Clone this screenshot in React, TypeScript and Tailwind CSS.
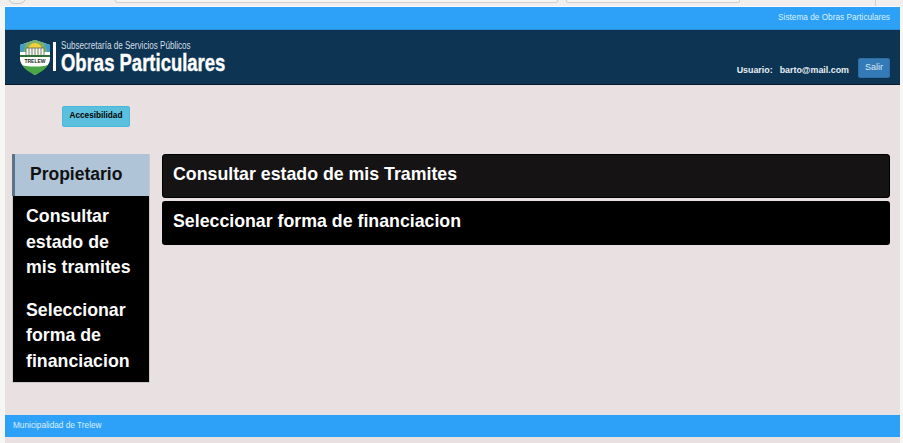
const font = "font-['Liberation_Sans',Arial,sans-serif]";

function Shield() {
  return (
    <svg width="30" height="36" viewBox="0 0 30 36" className="shrink-0">
      <path d="M0 6 L15 1 L30 6 V20 C30 27 21 32 15 36 C9 32 0 27 0 20 Z" fill="#ffffff" />
      <path d="M0 6 L15 1 L30 6 V13 H0 Z" fill="#3f9fc9" />
      <path d="M15 1 L24 4 L27 13 H3 L6 4 Z" fill="#7fb06a" />
      <circle cx="15" cy="11" r="7" fill="#f3cf3c" />
      <rect x="6" y="9" width="18" height="8" fill="#f4f4ec" stroke="#4b5a4c" strokeWidth="0.7" />
      <path d="M9 9v8M12 9v8M15 9v8M18 9v8M21 9v8" stroke="#4b5a4c" strokeWidth="0.7" />
      <rect x="0" y="16" width="30" height="2" fill="#2f6e35" />
      <path d="M2 26 C8 28 22 28 28 26 C25 31 19 34 15 36 C11 34 5 31 2 26 Z" fill="#4aa547" />
      <text x="15" y="23.5" textAnchor="middle" fontSize="5" fontWeight="700" fill="#1c2a1c" fontFamily="Liberation Sans, sans-serif">TRELEW</text>
    </svg>
  );
}

export default function App() {
  const sideLinks = ["Consultar estado de mis tramites", "Seleccionar forma de financiacion"];

  return (
    <div className={`${font} w-[903px] h-[443px] overflow-hidden bg-[#f6f6f4]`}>
      <div className="h-[7px] relative bg-[#f0efed]">
        <div className="absolute left-[8px] -top-[9px] w-[18px] h-[13px] rounded-full border border-[#c4c4c4]" />
        <div className="absolute left-[115px] -top-[2px] w-[443px] h-[5px] rounded-[2px] border border-[#cfcfcf] bg-[#f4f4f3]" />
        <div className="absolute left-[566px] -top-[2px] w-[174px] h-[5px] rounded-[2px] border border-[#cfcfcf] bg-[#f4f4f3]" />
        <div className="absolute left-[875px] top-0 w-px h-[6px] bg-[#d0d0d0]" />
        <div className="absolute left-0 right-0 bottom-0 h-px bg-[#fafafa]" />
      </div>
      <div className="ml-[5px] mr-[3px] h-[436px] flex flex-col bg-[#e9e0e1]">
        <div className="h-[23px] bg-[#2da1f8] border-b border-[#2a8fdb] flex items-center justify-end pr-[10px]">
          <span className="text-[8.25px] text-[#dcefff]">Sistema de Obras Particulares</span>
        </div>
        <header className="h-[55px] bg-[#0d3553] border-b border-[#06192a] flex">
          <div className="flex items-center pl-[15px] pb-[1px]">
            <Shield />
            <div className="w-[3px] h-[29px] bg-white ml-[3px] mr-[5px]" />
            <div className="flex flex-col text-white">
              <span className="text-[10px] leading-[12px] text-[#d6dfe6] origin-left scale-x-[0.81]">Subsecretaría de Servicios Públicos</span>
              <span className="text-[24px] leading-[20px] mt-[1px] font-bold origin-left scale-x-[0.77] [-webkit-text-stroke:0.4px_white]">Obras Particulares</span>
            </div>
          </div>
          <div className="ml-auto flex items-end pr-[10px] pb-[6px]">
            <span className="text-[8.9px] font-bold text-[#e8eef3] mb-[1px]">Usuario:</span>
            <span className="text-[8.9px] font-bold text-[#e8eef3] ml-[7px] mb-[1px]">barto@mail.com</span>
            <div className="ml-[9px] w-[32px] h-[20px] rounded-[2px] bg-[#337ab7] border border-[#2e6da4] flex items-center justify-center text-[9px] text-[#dcebf7]">Salir</div>
          </div>
        </header>
        <main className="flex-1 flex flex-col">
          <div className="pl-[57px] pt-[21px]">
            <div className="w-[68px] h-[21px] rounded-[2px] bg-[#5bc0de] border border-[#46b8da] flex items-center justify-center text-[8.2px] font-bold text-black">Accesibilidad</div>
          </div>
          <div className="flex items-start mt-[27px] pl-[7px]">
            <aside className="w-[138px] border border-[#cfc8c8] border-t-0 bg-black">
              <div className="-ml-px h-[42px] bg-[#b0c4d8] border-l-[3px] border-[#5d7388] flex items-center pl-[15px] pb-[2px] text-[17.5px] font-bold text-[#111]">Propietario</div>
              <div className="flex flex-col gap-[17px] pl-[13px] pr-[12px] pt-[8px] pb-[8px]">
                {sideLinks.map((l) => (
                  <div key={l} className="text-[17.75px] leading-[25.5px] font-bold text-[#fbfbfb]">{l}</div>
                ))}
              </div>
            </aside>
            <div className="ml-[12px] w-[728px] flex flex-col gap-[3px]">
              <div className="h-[44px] rounded-[3px] bg-[#161314] border border-black flex items-center pl-[10px] pb-[3px] text-[17.75px] font-bold text-white">Consultar estado de mis Tramites</div>
              <div className="h-[44px] rounded-[3px] bg-black flex items-center pl-[11px] pb-[3px] text-[17.75px] font-bold text-white">Seleccionar forma de financiacion</div>
            </div>
          </div>
        </main>
        <footer className="h-[22px] bg-[#2da1f8] flex items-center pl-[8px] pt-[1px]">
          <span className="text-[8.25px] text-[#dcefff]">Municipalidad de Trelew</span>
        </footer>
        <div className="h-[6px]" />
      </div>
    </div>
  );
}
